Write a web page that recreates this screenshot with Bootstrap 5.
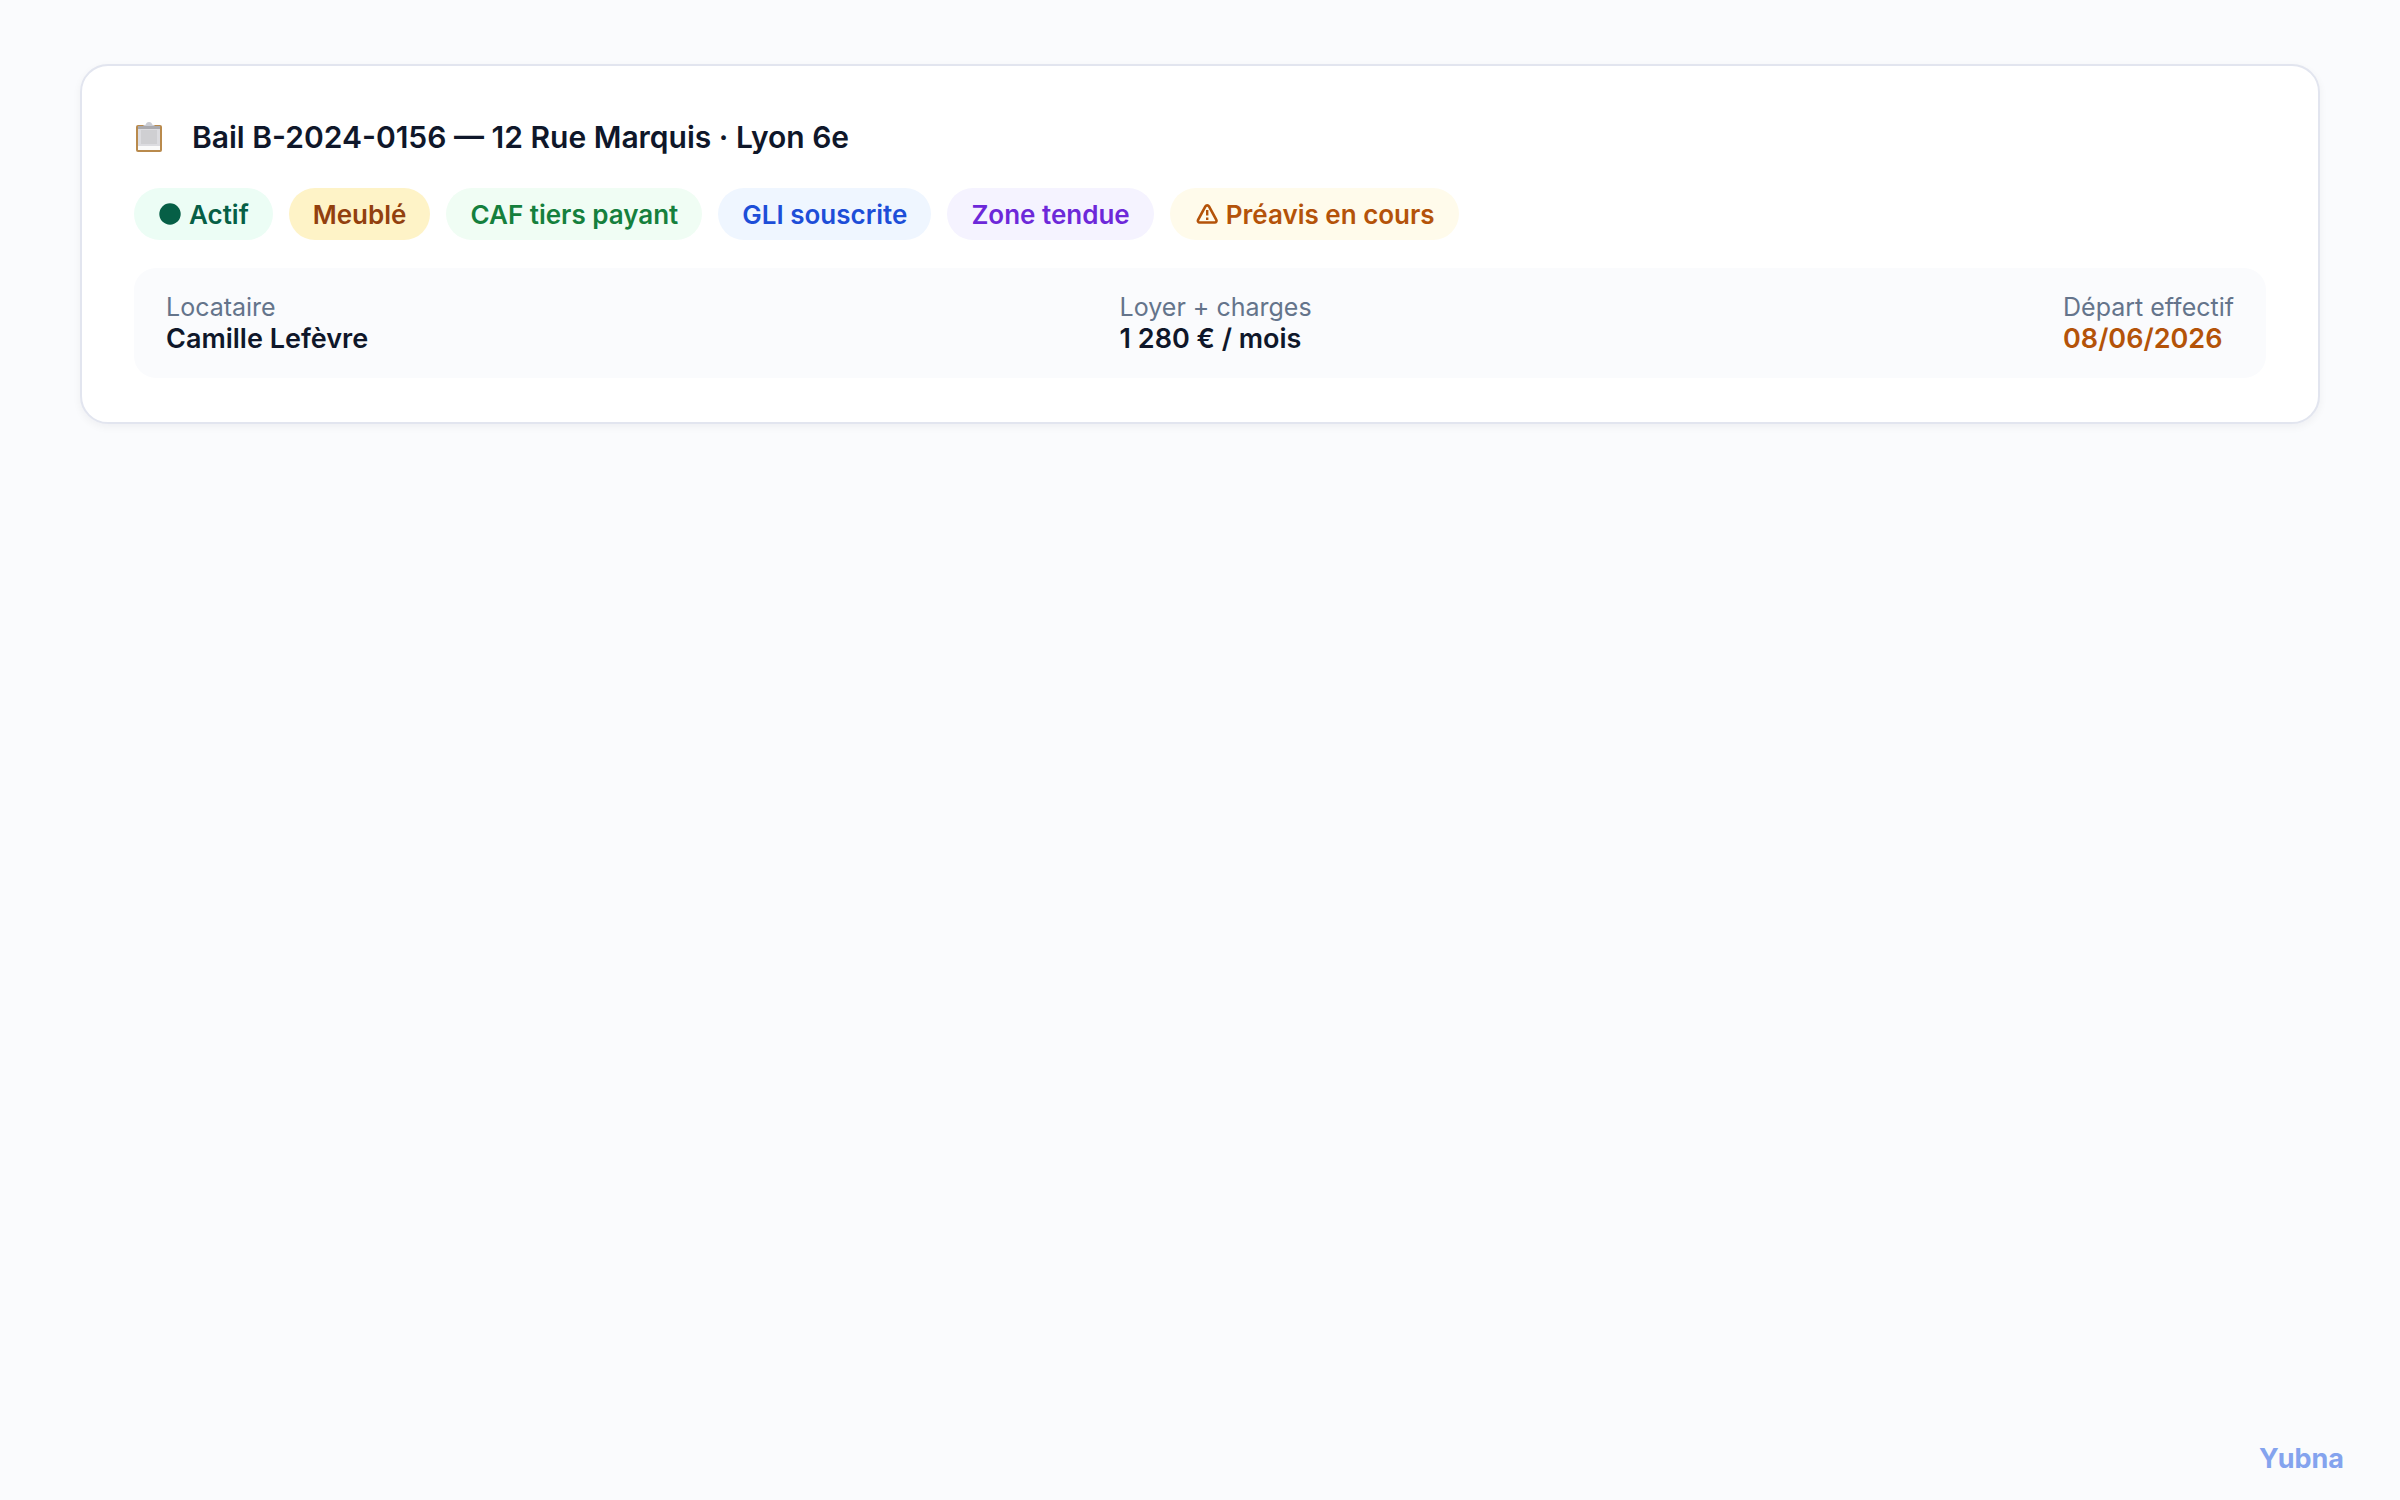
<!DOCTYPE html>
<html lang="fr">
<head>
<meta charset="utf-8">
<meta name="viewport" content="width=device-width, initial-scale=1">
<title>Bail B-2024-0156</title>
<link href="https://cdn.jsdelivr.net/npm/bootstrap@5.3.0/dist/css/bootstrap.min.css" rel="stylesheet">
<style>
  body { background: #fafbfd; color: #0f172a; font-family: Inter, "Liberation Sans", sans-serif; }
  .page-shell { padding: 64px 80px 24px; }
  .lease-card { border: 2px solid #e2e5ef; border-radius: 28px; padding: 51px 52px 44px; box-shadow: 0 3px 8px rgba(15, 23, 42, .05); }
  .lease-head { gap: 28px; margin-bottom: 31px; }
  .lease-title { font-size: 30px; line-height: 40px; font-weight: 600; }
  .lease-tags { gap: 16px; margin-bottom: 28px; }
  .tag { display: inline-flex; align-items: center; gap: 8px; padding: 11px 24px 9px; border-radius: 26px; font-size: 26px; line-height: 32px; font-weight: 600; }
  .tag-active { background: #ecfdf5; color: #065f46; }
  .tag-furnished { background: #fef3c7; color: #92400e; }
  .tag-caf { background: #f0fdf4; color: #15803d; }
  .tag-gli { background: #eff6ff; color: #1d4ed8; }
  .tag-zone { background: #f5f3ff; color: #6d28d9; }
  .tag-notice { background: #fffbeb; color: #b45309; }
  .lease-facts { background: #fafbfd; border-radius: 22px; padding: 23px 32px; }
  .fact-label { font-size: 25px; line-height: 32px; font-weight: 400; color: #64748b; }
  .fact-value { font-size: 27px; line-height: 32px; font-weight: 600; }
  .fact-due { color: #b45309; }
  .brand { color: #84a3ee; font-size: 27px; line-height: 36px; font-weight: 700; padding-right: 56px; padding-bottom: 23px; }
</style>
<script src="https://cdn.jsdelivr.net/npm/bootstrap@5.3.0/dist/js/bootstrap.bundle.min.js"></script>
</head>
<body class="d-flex flex-column min-vh-100">
  <main class="page-shell flex-grow-1">
    <article class="card lease-card">
      <header class="lease-head d-flex align-items-center">
        <svg width="30" height="32" viewBox="0 0 30 32" aria-hidden="true">
          <rect x="2" y="4" width="26" height="27" rx="2" fill="#b98a4c"/>
          <rect x="4" y="6" width="22" height="23" fill="#fafafa"/>
          <rect x="4" y="6" width="22" height="19" fill="#dcdce0"/>
          <rect x="7" y="9" width="16" height="14" fill="#cfcfd2"/>
          <path d="M4 5h22v3H4z" fill="#a9a9ae"/>
          <path d="M9 5q0-1 3-1.500a3 2.500 0 0 1 6 0q3 .5 3 1.500z" fill="#c9cbd2"/>
        </svg>
        <h1 class="lease-title mb-0">Bail B-2024-0156 — 12 Rue Marquis · Lyon 6e</h1>
      </header>
      <div class="lease-tags d-flex flex-wrap">
        <span class="tag tag-active"><svg width="23" height="24" viewBox="0 0 23 24" aria-hidden="true"><circle cx="12" cy="11" r="10.700" fill="currentColor"/></svg>Actif</span>
        <span class="tag tag-furnished">Meublé</span>
        <span class="tag tag-caf">CAF tiers payant</span>
        <span class="tag tag-gli">GLI souscrite</span>
        <span class="tag tag-zone">Zone tendue</span>
        <span class="tag tag-notice"><svg width="24" height="22" viewBox="-2 1 24 22" fill="none" stroke="currentColor" aria-hidden="true"><path d="M9.400 3.400 2.200 16.700c-.8 1.500 0 2.800 1.500 2.800h15c1.500 0 2.300-1.300 1.500-2.800L13 3.400c-.8-1.400-2.800-1.400-3.600 0z" stroke-width="2.600" stroke-linejoin="round"/><path d="M11.200 7v5.500M11.200 14.500v2.400" stroke-width="2.400"/></svg>Préavis en cours</span>
      </div>
      <dl class="lease-facts d-flex justify-content-between mb-0">
        <div><dt class="fact-label">Locataire</dt><dd class="fact-value mb-0">Camille Lefèvre</dd></div>
        <div><dt class="fact-label">Loyer + charges</dt><dd class="fact-value mb-0">1 280 € / mois</dd></div>
        <div><dt class="fact-label">Départ effectif</dt><dd class="fact-value fact-due mb-0">08/06/2026</dd></div>
      </dl>
    </article>
  </main>
  <footer class="brand text-end">Yubna</footer>
</body>
</html>
